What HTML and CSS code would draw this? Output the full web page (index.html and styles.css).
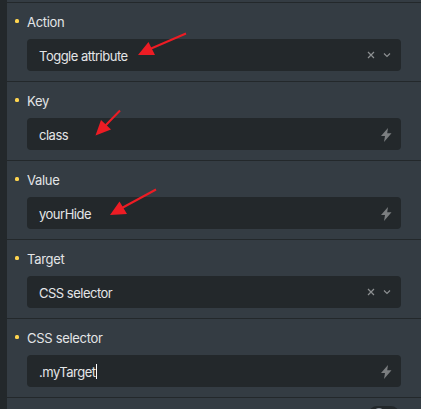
FILE: index.html
```html
<!DOCTYPE html>
<html lang="en">
<head>
    <meta charset="UTF-8">
    <meta name="viewport" content="width=device-width, initial-scale=1.0">
    <title>Interaction settings</title>
    <link rel="stylesheet" href="styles.css">
</head>
<body>
    <div class="panel">
        <div class="control">
            <div class="control-label">Action</div>
            <div class="field">
                <span class="field-value">Toggle attribute</span>
                <svg class="icon-clear" viewBox="0 0 8 8"><path d="M1 1l6 6M7 1l-6 6"/></svg>
                <svg class="icon-chevron" viewBox="0 0 8 8"><path d="M1 2.5l3 3 3-3"/></svg>
            </div>
        </div>

        <div class="control">
            <div class="control-label">Key</div>
            <div class="field">
                <span class="field-value">class</span>
                <svg class="icon-bolt" viewBox="0 0 12 14"><path d="M8 0L1 8h4L4 14l7.500-8.800H7.200z"/></svg>
            </div>
        </div>

        <div class="control">
            <div class="control-label">Value</div>
            <div class="field">
                <span class="field-value">yourHide</span>
                <svg class="icon-bolt" viewBox="0 0 12 14"><path d="M8 0L1 8h4L4 14l7.500-8.800H7.200z"/></svg>
            </div>
        </div>

        <div class="control">
            <div class="control-label">Target</div>
            <div class="field">
                <span class="field-value">CSS selector</span>
                <svg class="icon-clear" viewBox="0 0 8 8"><path d="M1 1l6 6M7 1l-6 6"/></svg>
                <svg class="icon-chevron" viewBox="0 0 8 8"><path d="M1 2.5l3 3 3-3"/></svg>
            </div>
        </div>

        <div class="control">
            <div class="control-label">CSS selector</div>
            <div class="field">
                <span class="field-value">.myTarget<span class="caret"></span></span>
                <svg class="icon-bolt" viewBox="0 0 12 14"><path d="M8 0L1 8h4L4 14l7.500-8.800H7.200z"/></svg>
            </div>
        </div>

        <div class="control control-inline">
            <div class="switch"><span class="switch-knob"></span></div>
        </div>
    </div>

    <svg class="arrows" viewBox="0 0 421 409">
        <path class="arrow-line" d="M186 33.5L150 49M120 110.5L104 127M156 189.5L121 208.5"/>
        <path class="arrow-head" d="M138 55L148.500 42L155 55zM95.500 135.500L101 120L111 129.500zM110 215L119.500 201.500L127 214z"/>
    </svg>
</body>
</html>
```

FILE: styles.css
```css
:root {
    --panel-bg: #343c43;
    --dark-bg: #23282b;
    --text-color: #e3e5e7;
    --icon-color: #8d9092;
    --accent-color: #ffd54f;
    --arrow-color: #ed1c24;
}

* {
    box-sizing: border-box;
}

body {
    margin: 0;
    height: 409px;
    padding-left: 7px;
    background-color: var(--dark-bg);
    color: var(--text-color);
    font-family: Inter, sans-serif;
    font-size: 13px;
    overflow: hidden;
}

.panel {
    height: 409px;
    padding-top: 2px;
    background-color: var(--panel-bg);
    overflow: hidden;
}

.control {
    height: 79px;
    padding: 9px 20px 0;
    border-top: 1px solid var(--dark-bg);
}

.control-label {
    display: flex;
    align-items: center;
    height: 20px;
    margin-bottom: 7px;
    letter-spacing: -0.3px;
}

.control-label::before {
    content: '';
    width: 4px;
    height: 4px;
    margin: -2px 8px 0 -12px;
    border-radius: 1.5px;
    background-color: var(--accent-color);
}

.field {
    display: flex;
    align-items: center;
    height: 32px;
    padding: 0 10px 0 12px;
    border-radius: 4px;
    background-color: var(--dark-bg);
}

.field-value {
    display: flex;
    align-items: center;
    flex: 1;
    padding-top: 1px;
    letter-spacing: -0.5px;
}

.caret {
    width: 1px;
    height: 15px;
    background-color: #fff;
}

.icon-clear,
.icon-chevron {
    width: 8px;
    height: 8px;
    fill: none;
    stroke: var(--icon-color);
    stroke-width: 1.2;
}

.icon-clear {
    margin-right: 8px;
}

.icon-bolt {
    width: 12px;
    height: 14px;
    margin: 2px -1px 0 0;
    fill: #7b7e80;
}

.control-inline {
    display: flex;
    justify-content: flex-end;
    padding: 8px 22px 0;
}

.switch {
    width: 30px;
    height: 16px;
    padding: 2px 4px;
    border-radius: 8px;
    background-color: var(--dark-bg);
}

.switch-knob {
    display: block;
    width: 12px;
    height: 12px;
    border-radius: 50%;
    background-color: #8b929b;
}

.arrows {
    position: absolute;
    top: 0;
    left: 0;
    width: 421px;
    height: 409px;
}

.arrow-line {
    stroke: var(--arrow-color);
    stroke-width: 2;
}

.arrow-head {
    fill: var(--arrow-color);
}
```
